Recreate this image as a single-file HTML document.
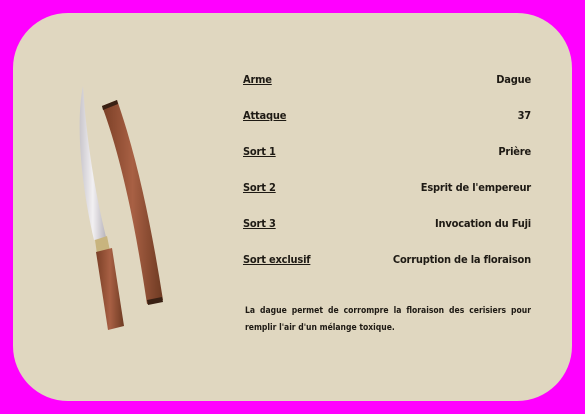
<!DOCTYPE html>
<html><head><style>
html,body{margin:0;padding:0;width:585px;height:414px;background:#ff00ff;overflow:hidden}
.card{position:absolute;left:13px;top:13px;width:559px;height:388px;background:#e0d7c0;border-radius:55px}
.row{position:absolute;left:243px;width:288px;font:bold 11px "DejaVu Sans Condensed","Liberation Sans",sans-serif;color:#1e1a14;letter-spacing:-0.2px}
.row .l{position:absolute;left:0;text-decoration:underline}
.row .r{position:absolute;right:0}
.desc{position:absolute;left:245px;top:303px;width:286px;font:8.5px/17px "DejaVu Sans Condensed","Liberation Sans",sans-serif;font-weight:600;color:#1e1a14;text-align:justify;text-align-last:left}
</style></head><body>
<div class="card"></div>
<svg style="position:absolute;left:0;top:0" width="585" height="414">
<defs>
<linearGradient id="w" x1="0" x2="1"><stop offset="0" stop-color="#7a3f26"/><stop offset=".5" stop-color="#a86044"/><stop offset="1" stop-color="#6e3a22"/></linearGradient>
<linearGradient id="b" x1="0" x2="1"><stop offset="0" stop-color="#c9c6cc"/><stop offset=".5" stop-color="#f2f0f2"/><stop offset="1" stop-color="#b8b4bc"/></linearGradient>
</defs>
<path d="M83 86 C76 120 80 180 94 240 L106 237 C92 180 86 130 83 86Z" fill="url(#b)"/>
<path d="M95 240 L107 236 L110 251 L97 254Z" fill="#c8b47e"/>
<path d="M96 252 L112 248 L124 326 L108 330Z" fill="url(#w)"/>
<path d="M102 106 L117 100 C138 160 152 230 163 300 L147 304 C136 230 122 160 102 106Z" fill="url(#w)"/>
<path d="M102 106 L117 100 L118 104 L103 110Z" fill="#3a2114"/>
<path d="M147 300 L162 297 L163 302 L148 305Z" fill="#3a2114"/>
</svg>
<div class="row" style="top:73px"><span class="l">Arme</span><span class="r">Dague</span></div>
<div class="row" style="top:109px"><span class="l">Attaque</span><span class="r">37</span></div>
<div class="row" style="top:145px"><span class="l">Sort 1</span><span class="r">Prière</span></div>
<div class="row" style="top:181px"><span class="l">Sort 2</span><span class="r">Esprit de l'empereur</span></div>
<div class="row" style="top:217px"><span class="l">Sort 3</span><span class="r">Invocation du Fuji</span></div>
<div class="row" style="top:253px"><span class="l">Sort exclusif</span><span class="r">Corruption de la floraison</span></div>
<div class="desc">La dague permet de corrompre la floraison des cerisiers pour remplir l'air d'un mélange toxique.</div>
</body></html>
